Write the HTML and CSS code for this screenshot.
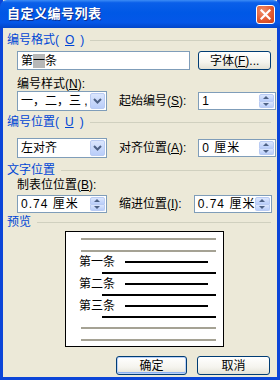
FILE: index.html
```html
<!DOCTYPE html>
<html lang="zh-CN">
<head>
    <meta charset="UTF-8">
    <title>自定义编号列表</title>
    <link rel="stylesheet" href="styles.css">
</head>
<body>
    <div class="window">
        <div class="titlebar">
            <span class="title">自定义编号列表</span>
            <span class="close">
                <svg width="11" height="11" viewBox="0 0 11 11">
                    <path d="M1.5 1.5 L9.5 9.5 M9.5 1.5 L1.5 9.5" stroke="#fff" stroke-width="2.2" stroke-linecap="square"/>
                </svg>
            </span>
        </div>

        <div class="content">
            <div class="group">编号格式(<u>O</u>)</div>
            <div class="row row-format">
                <div class="field text-field">第<span class="sel">一</span>条</div>
                <button class="btn">字体(<u>F</u>)...</button>
            </div>

            <div class="label">编号样式(<u>N</u>):</div>
            <div class="row row-grid">
                <div class="field combo">
                    <span class="combo-text">一，二，三 ,</span>
                    <span class="drop"><svg width="9" height="6" viewBox="0 0 9 6"><path d="M1 1 L4.5 4.5 L8 1" fill="none" stroke="#4D6185" stroke-width="2"/></svg></span>
                </div>
                <span class="side-label">起始编号(<u>S</u>):</span>
                <div class="field spin">
                    <span class="spin-text">1</span>
                    <span class="spin-btns"><span class="up"></span><span class="down"></span></span>
                </div>
            </div>

            <div class="group group-2">编号位置(<u>U</u>)</div>
            <div class="row row-grid row-align">
                <div class="field combo">
                    <span class="combo-text">左对齐</span>
                    <span class="drop"><svg width="9" height="6" viewBox="0 0 9 6"><path d="M1 1 L4.5 4.5 L8 1" fill="none" stroke="#4D6185" stroke-width="2"/></svg></span>
                </div>
                <span class="side-label">对齐位置(<u>A</u>):</span>
                <div class="field spin">
                    <span class="spin-text">0 厘米</span>
                    <span class="spin-btns"><span class="up"></span><span class="down"></span></span>
                </div>
            </div>

            <div class="group group-3">文字位置</div>
            <div class="label label-tab">制表位位置(<u>B</u>):</div>
            <div class="row row-grid row-tab">
                <div class="field spin">
                    <span class="spin-text">0.74 厘米</span>
                    <span class="spin-btns"><span class="up"></span><span class="down"></span></span>
                </div>
                <span class="side-label">缩进位置(<u>I</u>):</span>
                <div class="field spin">
                    <span class="spin-text">0.74 厘米</span>
                    <span class="spin-btns"><span class="up"></span><span class="down"></span></span>
                </div>
            </div>

            <div class="group group-4">预览</div>
            <div class="preview">
                <div class="pline gray first"></div>
                <div class="pline gray"></div>
                <div class="item"><span>第一条</span><i></i></div>
                <div class="pline black"></div>
                <div class="item"><span>第二条</span><i></i></div>
                <div class="pline black"></div>
                <div class="item"><span>第三条</span><i></i></div>
                <div class="pline black"></div>
                <div class="pline gray gap"></div>
                <div class="pline gray"></div>
            </div>

            <div class="actions">
                <button class="btn btn-ok">确定</button>
                <button class="btn btn-cancel">取消</button>
            </div>
        </div>
    </div>
</body>
</html>
```

FILE: styles.css
```css
body {
    margin: 0;
    font-family: "Liberation Sans", "Noto Sans CJK SC", sans-serif;
    font-size: 12px;
    color: #000;
}

.window {
    width: 280px;
    height: 380px;
    box-sizing: border-box;
    background: #ECE9D8;
    border: 3px solid #0B45D8;
    border-top: none;
    display: flex;
    flex-direction: column;
}

.titlebar {
    height: 28px;
    margin: 0 -3px;
    padding: 0 5px 0 7px;
    display: flex;
    align-items: center;
    justify-content: space-between;
    background: linear-gradient(#3C8CF6 0, #0A5FE9 10%, #0058E6 45%, #0457E8 80%, #0246C9 100%);
    border-radius: 7px 7px 0 0;
}

.title {
    color: #fff;
    font-weight: bold;
    font-size: 13px;
    letter-spacing: 0.5px;
    line-height: 14px;
    text-shadow: 1px 1px 0 #0F2E8C;
}

.close {
    width: 19px;
    height: 19px;
    margin-top: 1px;
    box-sizing: border-box;
    border: 1px solid #fff;
    border-radius: 3px;
    background: radial-gradient(circle at 35% 30%, #F0906C 0, #E25A31 55%, #C7401A 100%);
    display: flex;
    align-items: center;
    justify-content: center;
}

.content {
    flex: 1;
    padding: 5px 6px 0 4px;
    display: flex;
    flex-direction: column;
}

.group {
    height: 14px;
    line-height: 14px;
    color: #0046D5;
    display: flex;
    align-items: center;
    gap: 6px;
}

.group::after {
    content: "";
    flex: 1;
    border-top: 1px solid #D0D0BF;
    margin-top: 1px;
}

.group-2 { margin-top: 4px; }
.group-3 { margin-top: 5px; }
.group-4 { margin-top: 2px; }

.label {
    height: 14px;
    line-height: 14px;
    margin: 7px 0 0 10px;
}

.label-tab { margin-top: 1px; }

.row {
    margin-left: 10px;
    display: flex;
    align-items: center;
}

.row-format {
    margin-top: 4px;
    gap: 8px;
}

.row-grid {
    display: grid;
    grid-template-columns: 90px 1fr 78px;
    column-gap: 12px;
    align-items: center;
    margin-top: 0;
}

.row-align { margin-top: 9px; }
.row-tab { margin-top: 3px; }

.field {
    box-sizing: border-box;
    height: 19px;
    border: 1px solid #7F9DB9;
    background: #fff;
    display: flex;
    align-items: center;
}

.text-field {
    width: 174px;
    padding-left: 3px;
    line-height: 14px;
}

.sel {
    background: #B7B7B7;
}

.combo {
    height: 20px;
    padding: 1px;
}

.combo-text {
    flex: 1;
    min-width: 0;
    padding-left: 2px;
    white-space: nowrap;
    line-height: 16px;
    height: 16px;
}

.drop {
    flex: none;
    width: 15px;
    height: 16px;
    box-sizing: border-box;
    border: 1px solid #B9CBF3;
    border-radius: 2px;
    background: linear-gradient(#DBE6FD, #B9CDF9);
    display: flex;
    align-items: center;
    justify-content: center;
}

.spin {
    height: 18px;
    padding: 1px;
}

.spin-text {
    flex: 1;
    padding-left: 2px;
    line-height: 14px;
    letter-spacing: 1px;
    white-space: nowrap;
}

.spin-btns {
    width: 15px;
    height: 14px;
    display: flex;
    flex-direction: column;
}

.spin-btns span {
    flex: 1;
    box-sizing: border-box;
    border: 1px solid #B9CBF3;
    background: linear-gradient(#DBE6FD, #B9CDF9);
    position: relative;
}

.spin-btns .up { border-radius: 2px 2px 0 0; }
.spin-btns .down { border-radius: 0 0 2px 2px; border-top: none; }

.spin-btns span::after {
    content: "";
    position: absolute;
    left: 3px;
    width: 0;
    height: 0;
    border-left: 3.5px solid transparent;
    border-right: 3.5px solid transparent;
}

.spin-btns .up::after {
    top: 1px;
    border-bottom: 3px solid #4D6185;
}

.spin-btns .down::after {
    top: 1px;
    border-top: 3px solid #4D6185;
}

.side-label {
    line-height: 14px;
    white-space: nowrap;
}

.btn {
    font-family: inherit;
    font-size: 12px;
    height: 19px;
    width: 73px;
    padding: 0;
    line-height: 14px;
    border: 1px solid #003C74;
    border-radius: 3px;
    background: linear-gradient(#FFFFFF 0, #F5F4EE 60%, #E3E1D6 100%);
    color: #000;
}

.preview {
    margin: 2px 0 0 58px;
    width: 159px;
    height: 116px;
    box-sizing: border-box;
    border: 1px solid #000;
    background: #fff;
    padding-top: 6px;
    display: flex;
    flex-direction: column;
}

.pline {
    height: 2px;
    flex: none;
}

.pline.gray {
    background: #A5A294;
    width: 135px;
    margin: 10px 0 0 15px;
}

.pline.gray.first { margin-top: 0; }
.pline.gray.gap { margin-top: 9px; }

.pline.black {
    background: #000;
    width: 114px;
    margin: 4px 0 0 36px;
}

.item {
    height: 12px;
    margin: 4px 0 0 13px;
    display: flex;
    align-items: center;
    gap: 10px;
    line-height: 12px;
}

.item i {
    width: 83px;
    height: 2px;
    background: #000;
}

.actions {
    margin-top: 9px;
    display: flex;
    justify-content: flex-end;
    gap: 10px;
    padding-right: 1px;
}

.btn-ok {
    width: 71px;
    box-shadow: inset 0 0 0 1px #B9D1F8, inset 0 -1px 0 1px #8CB0F0;
}
```
